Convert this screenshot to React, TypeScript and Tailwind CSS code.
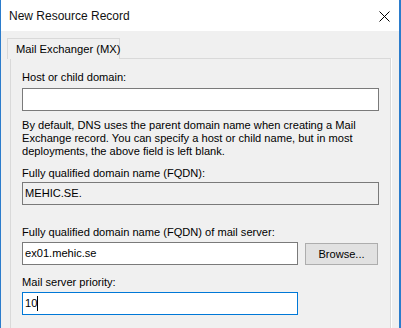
import React from "react";

const font = { fontFamily: '"Liberation Sans", Arial, sans-serif' };

export default function App() {
  return (
    <div
      className="w-[401px] h-[328px] overflow-hidden bg-[#f0f0f0] border-l border-r-2 border-[#2b7ccc] box-border text-black"
      style={font}
    >
      {/* Title bar */}
      <div className="h-[31px] bg-white flex items-center justify-between pl-[8px] pr-[9px]">
        <span className="text-[12px] leading-[14px] text-[#111]">New Resource Record</span>
        <svg width="11" height="11" viewBox="0 0 11 11" className="mt-[1px]">
          <path d="M0.5 0.5 L10.5 10.5 M10.5 0.5 L0.5 10.5" stroke="#000" strokeWidth="1" />
        </svg>
      </div>

      {/* Body */}
      <div className="pt-[7px] pl-[6px]">
        {/* Tab header */}
        <div className="relative z-10 w-[113px] h-[21px] -mb-px border border-b-0 border-[#d9d9d9] bg-[#f0f0f0] pl-[8px] flex items-center whitespace-nowrap text-[11.2px] leading-[13px]">
          Mail Exchanger (MX)
        </div>
        {/* Panel */}
        <div className="ml-[3px] w-[381px] h-[280px] border border-[#d9d9d9] bg-[#f0f0f0] shadow-[1px_0_0_#ffffff] pl-[11px] pt-[12px] flex flex-col text-[11.1px] leading-[13px]">
          <div>Host or child domain:</div>
          <div className="mt-[4px] w-[357px] h-[23px] border border-[#7a7a7a] bg-white" />
          <div className="mt-[8px] w-[345px]">
            By default, DNS uses the parent domain name when creating a Mail Exchange record. You can specify a host or child name, but in most deployments, the above field is left blank.
          </div>
          <div className="mt-[9px]">Fully qualified domain name (FQDN):</div>
          <div className="mt-[2px] w-[357px] h-[23px] border border-[#7a7a7a] bg-[#f0f0f0] pl-[2px] flex items-center">
            MEHIC.SE.
          </div>
          <div className="mt-[21px]">Fully qualified domain name (FQDN) of mail server:</div>
          <div className="mt-[3px] flex items-start">
            <div className="w-[276px] h-[23px] border border-[#7a7a7a] bg-white pl-[2px] flex items-center">
              ex01.mehic.se
            </div>
            <div className="ml-[7px] mt-[1px] w-[73px] h-[22px] border border-[#adadad] bg-[#e1e1e1] flex items-center justify-center">
              Browse...
            </div>
          </div>
          <div className="mt-[11px]">Mail server priority:</div>
          <div className="mt-[3px] w-[276px] h-[23px] border border-[#0078d7] bg-white pl-[2px] flex items-center">
            <span>10</span>
            <span className="inline-block w-px h-[15px] bg-black" />
          </div>
        </div>
      </div>
    </div>
  );
}
